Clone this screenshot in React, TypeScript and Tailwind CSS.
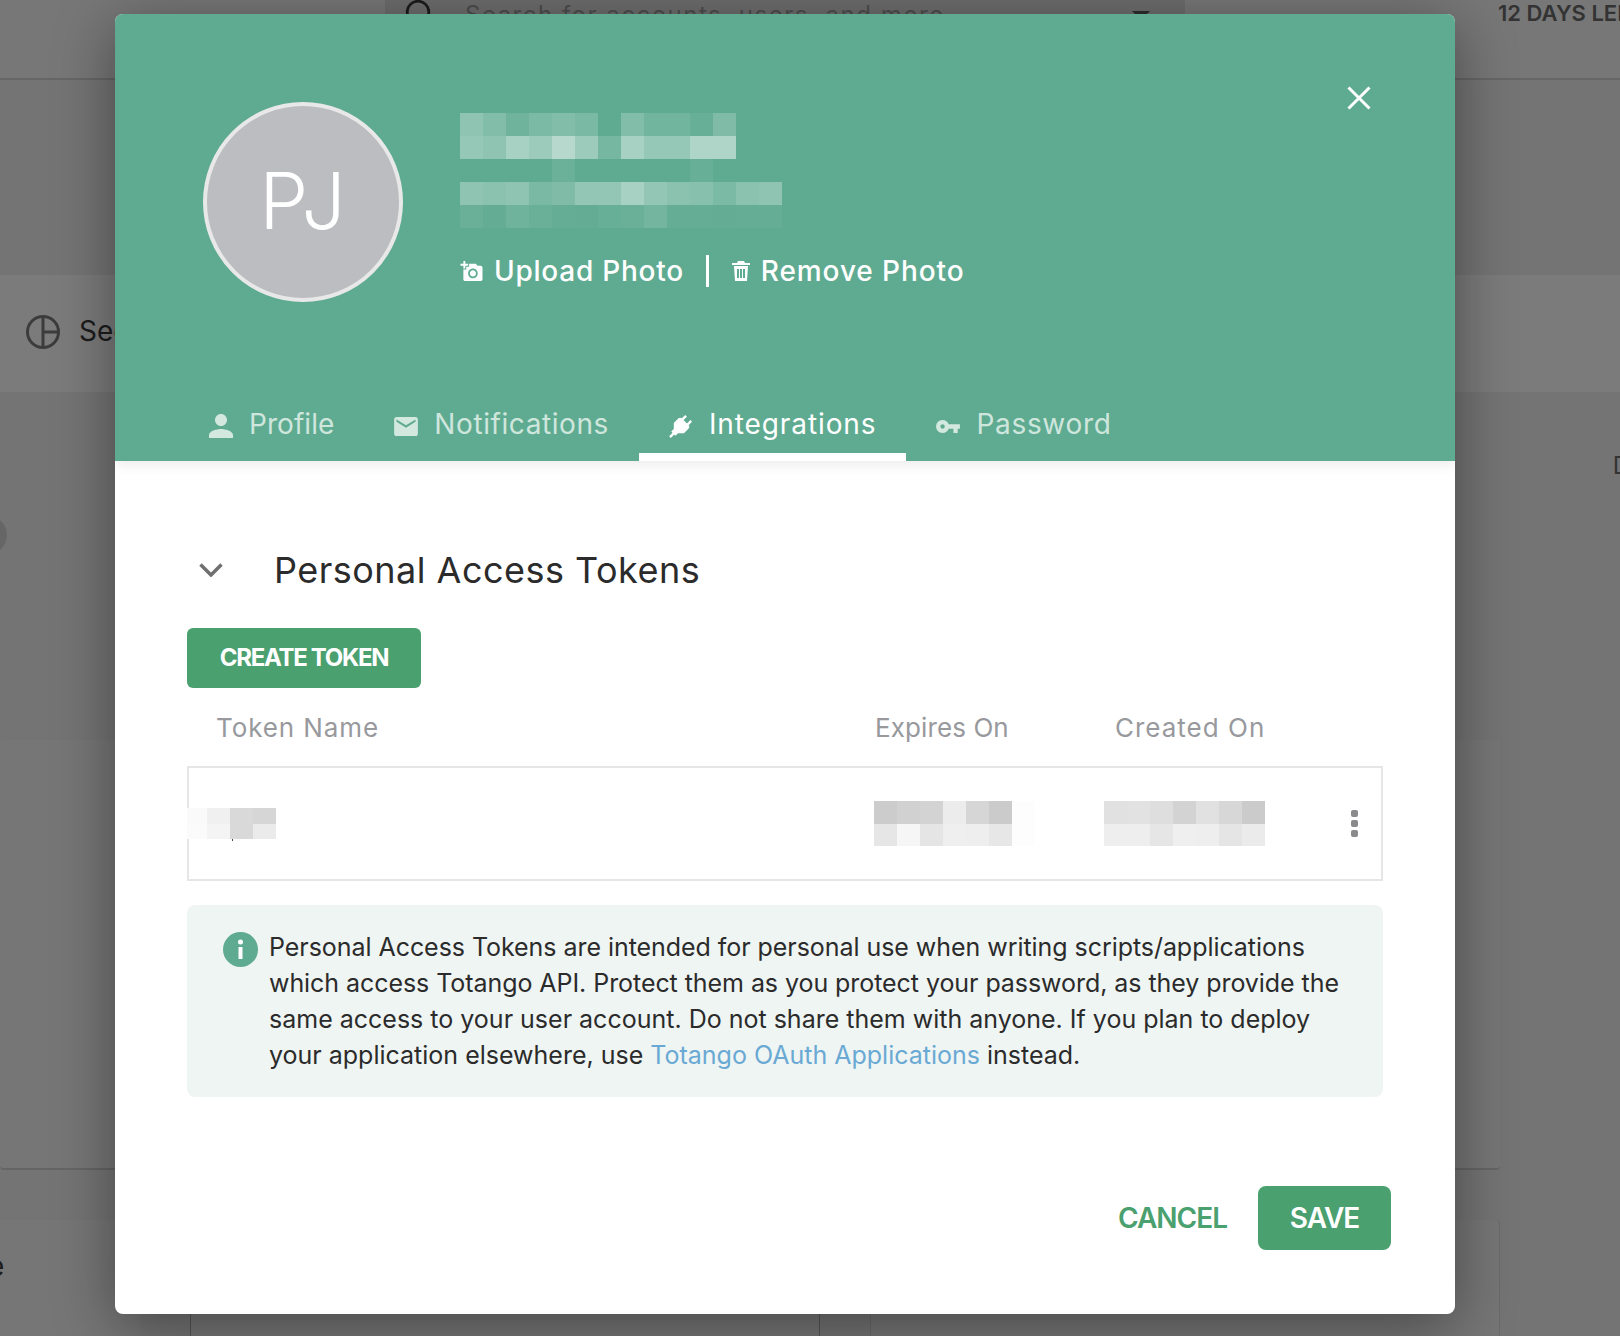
const nameRows = [
  [0.3, 0.22, 0.1, 0.18, 0.22, 0.17, 0, 0.22, 0.12, 0.12, 0.05, 0.2],
  [0.35, 0.3, 0.45, 0.38, 0.55, 0.38, 0.15, 0.45, 0.35, 0.35, 0.5, 0.5],
  [0, 0, 0, 0, 0.08, 0, 0, 0, 0, 0, 0.05, 0],
  [0.3, 0.28, 0.3, 0.17, 0.2, 0.33, 0.33, 0.45, 0.33, 0.28, 0.25, 0.18, 0.28, 0.3],
  [0.07, 0.03, 0.1, 0.07, 0.04, 0.03, 0.05, 0.07, 0.13, 0.04, 0.04, 0.03, 0.04, 0.04],
];

const expiresRows = [
  ["#cccccc", "#d1d1d1", "#d3d3d3", "#ececec", "#d6d6d6", "#cbcbcb", "#fdfdfd"],
  ["#e6e6e6", "#f6f6f6", "#e5e5e5", "#efefef", "#eeeeee", "#e7e7e7", "#fdfdfd"],
];

const createdRows = [
  ["#e1e1e1", "#e2e2e2", "#dedede", "#d3d3d3", "#e1e1e1", "#d7d7d7", "#cbcbcb"],
  ["#eeeeee", "#eeeeee", "#e6e6e6", "#efefef", "#eeeeee", "#e5e5e5", "#ebebeb"],
];

const tokenRows = [
  ["#fafafa", "#f0f0f0", "#d9d9d9", "#d6d6d6"],
  ["#fbfbfb", "#f4f4f4", "#d9d9d9", "#ebebeb"],
];

function ColorCells({ rows, height }: { rows: string[][]; height: string }) {
  return (
    <div className="flex flex-col">
      {rows.map((row, r) => (
        <div key={r} className={`flex ${height}`}>
          {row.map((color, c) => (
            <div key={c} className="w-[23px]" style={{ backgroundColor: color }} />
          ))}
        </div>
      ))}
    </div>
  );
}

function BlurredName() {
  return (
    <div className="flex flex-col">
      {nameRows.map((row, r) => (
        <div key={r} className="flex h-[23px]">
          {row.map((alpha, c) => (
            <div key={c} className="w-[23px]" style={{ backgroundColor: `rgba(255,255,255,${alpha})` }} />
          ))}
        </div>
      ))}
    </div>
  );
}

function Backdrop() {
  return (
    <div className="flex h-full flex-col text-[#1c1c1c]">
      <div className="flex h-[80px] items-start border-b-2 border-[#666666] bg-[#777777]">
        <div className="ml-[385px] flex h-[30px] w-[800px] shrink-0 items-center bg-[#6d6d6d]">
          <svg viewBox="0 0 24 24" className="-mt-[6px] ml-[20px] h-[26px] w-[26px] shrink-0 fill-none stroke-[#1c1c1c] stroke-[2.5]">
            <circle cx="12" cy="12" r="10" />
          </svg>
          <span className="ml-[34px] whitespace-nowrap text-[24px] tracking-[1.5px] text-[#4d4d4d]">Search for accounts, users, and more</span>
          <div className="ml-auto mr-[35px] h-0 w-0 border-x-[9px] border-t-[9px] border-x-transparent border-t-[#2c2c2c]" />
        </div>
        <span className="ml-[313px] whitespace-nowrap text-[22px] font-semibold leading-[26px] text-[#333333]">12 DAYS LEFT</span>
      </div>

      <div className="h-[195px]" />

      <div className="flex h-[117px] items-center bg-[#7b7b7b] pb-[4px] pl-[26px]">
        <svg viewBox="0 0 34 34" className="h-[34px] w-[34px] fill-none stroke-[#3c3c3c] stroke-[3]">
          <circle cx="17" cy="17" r="15.5" />
          <path d="M17 1.5v31M17 17h15.5" />
        </svg>
        <span className="mb-[2px] ml-[19px] text-[28px]">Segments</span>
      </div>

      <div className="h-[348px] pt-[122px]">
        <div className="flex items-start justify-between">
          <div className="-ml-[31px] mt-[2px] h-[38px] w-[38px] rounded-full bg-[#666666]" />
          <span className="-mr-[10px] -mt-[66px] text-[24px] text-[#333333]">D</span>
        </div>
      </div>

      <div className="h-[430px] w-[1500px] rounded-[4px] border-b-2 border-[#656565] bg-[#767676]" />

      <div className="mt-[50px] flex flex-1">
        <div className="w-[140px] bg-[#767676] pt-[25px]">
          <span className="-ml-[12px] block text-[28px]">e</span>
        </div>
        <div className="ml-[50px] w-[630px] border-x border-[#555555] bg-[#767676]" />
        <div className="ml-[50px] w-[630px] rounded-t-[4px] border-x border-[#6a6a6a] bg-[#767676]" />
      </div>
    </div>
  );
}

function Tab({ label, tracking, active, children }: { label: string; tracking: string; active?: boolean; children: React.ReactNode }) {
  return (
    <div
      className={`flex h-[72px] items-center gap-4 border-b-8 px-[30px] pt-[6px] text-[28px] ${
        active ? "border-white text-white" : "border-transparent text-[#cfe6dd]"
      }`}>
      <span className="flex w-6 translate-y-[2px] justify-center">{children}</span>
      <span className={tracking}>{label}</span>
    </div>
  );
}

export default function App() {
  return (
    <div className="relative h-[1336px] w-[1620px] overflow-hidden bg-[#747474] font-['Inter',sans-serif]">
      <Backdrop />

      <div className="absolute left-[115px] top-[14px] flex h-[1300px] w-[1340px] flex-col overflow-hidden rounded-[8px] bg-white shadow-[0_12px_60px_rgba(0,0,0,0.4)]">
        <div className="relative z-10 flex h-[447px] flex-col bg-[#5fab91] shadow-[0_4px_12px_rgba(0,0,0,0.08)]">
          <button className="absolute left-[1232px] top-[72px] text-white">
            <svg viewBox="0 0 24 24" className="h-[24px] w-[24px] fill-none stroke-white stroke-[3]">
              <path d="M1.5 1.5l21 21M22.5 1.5l-21 21" />
            </svg>
          </button>

          <div className="flex pl-[88px] pt-[88px]">
            <div className="flex h-[200px] w-[200px] items-center justify-center rounded-full border-4 border-[#e8e8e8] bg-[#bcbdc1] pb-[4px] text-[78px] font-light tracking-[1px] text-white">
              PJ
            </div>
            <div className="ml-[57px] pt-[11px]">
              <BlurredName />
              <div className="mt-[24px] flex h-[38px] items-center text-[28px] font-medium tracking-[0.75px] text-white">
                <svg viewBox="0 0 23 23" className="h-[22px] w-[23px] fill-white">
                  <path d="M3 4V1h2v3h3v2H5v3H3V6H0V4h3zm3 6V7h3V4h7l1.83 2H21c1.1 0 2 .9 2 2v12c0 1.1-.9 2-2 2H5c-1.1 0-2-.9-2-2V10h3zm7 9c2.76 0 5-2.24 5-5s-2.24-5-5-5-5 2.24-5 5 2.24 5 5 5zm-3.2-5c0 1.77 1.43 3.2 3.2 3.2s3.2-1.43 3.2-3.2-1.43-3.2-3.2-3.2-3.2 1.43-3.2 3.2z" />
                </svg>
                <span className="ml-[11px]">Upload Photo</span>
                <div className="ml-[22px] h-[32px] w-[3px] bg-white" />
                <svg viewBox="0 0 18 20" className="ml-[23px] h-[20px] w-[18px] fill-white">
                  <path d="M6 0h6l1 2h5v2H0V2h5zM2 5h14l-1 15H3zm3 3v9h2V8zm3 0v9h2V8zm3 0v9h2V8z" fillRule="evenodd" />
                </svg>
                <span className="ml-[11px] tracking-[0.9px]">Remove Photo</span>
              </div>
            </div>
          </div>

          <div className="mt-auto flex pl-16">
            <Tab label="Profile" tracking="tracking-[0.05px]">
              <svg viewBox="4 4 16 16" className="h-6 w-6 fill-[#d3e8df]">
                <path d="M12 12c2.21 0 4-1.79 4-4s-1.79-4-4-4-4 1.79-4 4 1.79 4 4 4zm0 2c-2.67 0-8 1.34-8 4v2h16v-2c0-2.66-5.33-4-8-4z" />
              </svg>
            </Tab>
            <Tab label="Notifications" tracking="tracking-[0.58px]">
              <svg viewBox="2 4 20 16" className="h-[19px] w-6 fill-[#d3e8df]">
                <path d="M20 4H4c-1.1 0-1.99.9-1.99 2L2 18c0 1.1.9 2 2 2h16c1.1 0 2-.9 2-2V6c0-1.1-.9-2-2-2zm0 4l-8 5-8-5V6l8 5 8-5v2z" />
              </svg>
            </Tab>
            <Tab label="Integrations" tracking="tracking-[0.9px]" active>
              <svg viewBox="2 2 20 20" className="h-6 w-6 fill-white">
                <g transform="rotate(45 12 12)">
                  <path d="M16 7V3h-2v4h-4V3H8v4h-.01C7 6.99 6 7.99 6 8.99v5.49L9.5 18v3h5v-3l3.5-3.51v-5.5c0-1-1-2-1.99-1.99z" />
                  <rect x="11" y="20" width="2" height="5" />
                </g>
              </svg>
            </Tab>
            <Tab label="Password" tracking="tracking-[0.68px]">
              <svg viewBox="1 6 22 12" className="h-[13px] w-6 fill-[#d3e8df]">
                <path d="M12.65 10C11.83 7.67 9.61 6 7 6c-3.31 0-6 2.69-6 6s2.69 6 6 6c2.61 0 4.83-1.67 5.65-4H17v4h4v-4h2v-4H12.65zM7 14c-1.1 0-2-.9-2-2s.9-2 2-2 2 .9 2 2-.9 2-2 2z" />
              </svg>
            </Tab>
          </div>
        </div>

        <div className="flex flex-1 flex-col px-[72px]">
          <div className="mt-[84px] flex h-[50px] items-center">
            <svg viewBox="0 0 24 14" className="ml-[12px] h-[14px] w-[24px] fill-none stroke-[#707070] stroke-[3.5]">
              <path d="M1.5 1.5L12 12 22.5 1.5" />
            </svg>
            <h2 className="ml-[51px] text-[36px] font-normal tracking-[0.48px] text-[#2b2b2b]">Personal Access Tokens</h2>
          </div>

          <button className="mt-[33px] flex h-[60px] w-[234px] items-center justify-center rounded-[6px] bg-[#4aa06f] text-[24px] font-bold tracking-[-1.3px] text-white">
            CREATE TOKEN
          </button>

          <div className="mt-[20px] grid h-[38px] grid-cols-[688px_240px_1fr] items-center text-[26px] text-[#98999d]">
            <span className="pl-[29px] tracking-[0.9px]">Token Name</span>
            <span className="tracking-[0.1px]">Expires On</span>
            <span className="tracking-[1px]">Created On</span>
          </div>

          <div className="mt-[20px] flex h-[115px] items-center border-2 border-[#e6e6e6]">
            <div className="relative -ml-[2px] w-[687px]">
              <div className="w-[89px] overflow-hidden">
                <div className="-ml-[3px]">
                  <ColorCells rows={tokenRows} height="h-[15.5px]" />
                </div>
              </div>
              <div className="absolute left-[45px] top-[31px] h-[2px] w-[1px] bg-[#444444]" />
            </div>
            <div className="w-[230px]">
              <ColorCells rows={expiresRows} height="h-[22.5px]" />
            </div>
            <ColorCells rows={createdRows} height="h-[22.5px]" />
            <div className="ml-auto mr-[23px] flex flex-col gap-[3px]">
              <div className="h-[7px] w-[7px] rounded-[2px] bg-[#8a8a8d]" />
              <div className="h-[7px] w-[7px] rounded-[2px] bg-[#8a8a8d]" />
              <div className="h-[7px] w-[7px] rounded-[2px] bg-[#8a8a8d]" />
            </div>
          </div>

          <div className="mt-[24px] flex h-[192px] rounded-[8px] bg-[#eff5f3] pl-[36px] pt-[24px]">
            <svg viewBox="0 0 35 35" className="mt-[3px] h-[35px] w-[35px] shrink-0">
              <circle cx="17.5" cy="17.5" r="17.5" fill="#5fab91" />
              <rect x="15.5" y="15" width="4" height="12" rx="0.5" fill="#ffffff" />
              <circle cx="17.5" cy="10" r="2.5" fill="#ffffff" />
            </svg>
            <p className="ml-[11px] whitespace-nowrap text-[25px] leading-[36px] text-[#2b2b2b]">
              <span className="tracking-[-0.05px]">Personal Access Tokens are intended for personal use when writing scripts/applications</span>
              <br />
              <span className="tracking-[-0.06px]">which access Totango API. Protect them as you protect your password, as they provide the</span>
              <br />
              same access to your user account. Do not share them with anyone. If you plan to deploy
              <br />
              your application elsewhere, use <span className="text-[#6aa9d4]">Totango OAuth Applications</span> instead.
            </p>
          </div>

          <div className="-mr-[8px] mt-[89px] flex justify-end text-[28px] font-semibold tracking-[-1px]">
            <button className="mr-[31px] text-[#4aa06f]">CANCEL</button>
            <button className="flex h-[64px] w-[133px] items-center justify-center rounded-[8px] bg-[#4aa06f] text-white">
              SAVE
            </button>
          </div>
        </div>
      </div>
    </div>
  );
}
